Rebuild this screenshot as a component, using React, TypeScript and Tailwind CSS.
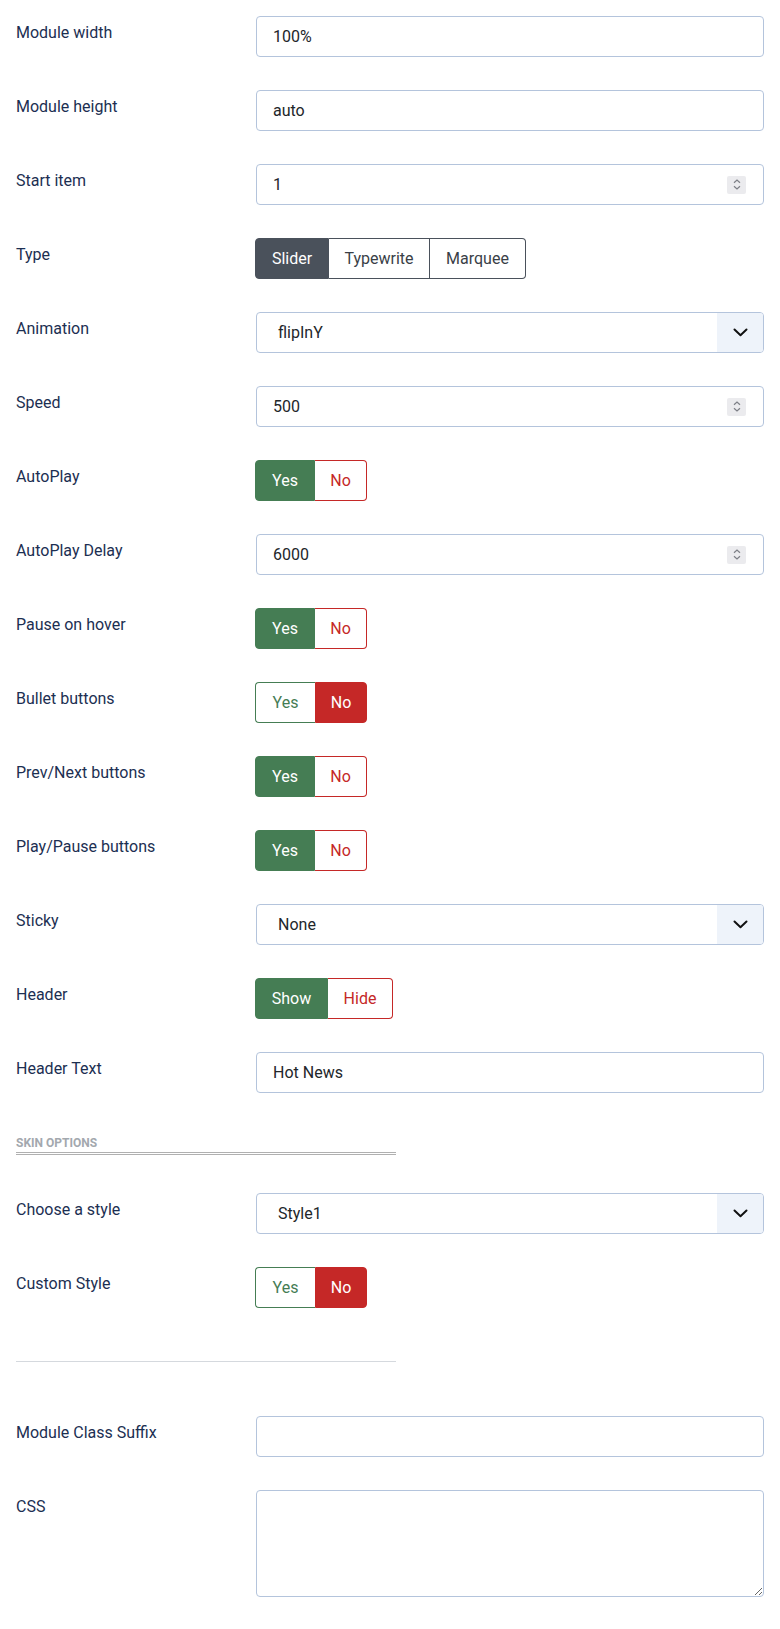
import React from 'react';

const labelCls = 'w-[240px] shrink-0 pt-[5px] text-base leading-6 text-[#1c2f52]';
const inputCls =
  'h-[41px] w-full rounded-[4px] border border-[#b4c4dc] bg-white px-4 text-base text-[#22262a] flex items-center';

function Row({ label, children, className = 'mb-[33px]' }: { label: string; children: React.ReactNode; className?: string }) {
  return (
    <div className={`flex ${className}`}>
      <div className={labelCls}>{label}</div>
      <div className="flex-1 min-w-0">{children}</div>
    </div>
  );
}

function TextBox({ value }: { value: string }) {
  return <div className={inputCls}>{value}</div>;
}

function NumberBox({ value }: { value: string }) {
  return (
    <div className={`${inputCls} justify-between`}>
      <span>{value}</span>
      <span className="mr-[1px] flex h-[18px] w-[19px] flex-col items-center justify-center rounded-[2px] bg-[#ebebee]">
        <svg width="10" height="13" viewBox="0 0 10 13" fill="none" stroke="#7d7f86" strokeWidth="1.2">
          <path d="M2 4.8 L5 2 L8 4.8" />
          <path d="M2 8.2 L5 11 L8 8.2" />
        </svg>
      </span>
    </div>
  );
}

function SelectBox({ value }: { value: string }) {
  return (
    <div className="flex h-[41px] w-full overflow-hidden rounded-[4px] border border-[#b4c4dc] bg-white text-base text-[#22262a]">
      <div className="flex flex-1 items-center pl-[21px]">{value}</div>
      <div className="flex w-[46px] items-center justify-center bg-[#eef3fa]">
        <svg width="15" height="9" viewBox="0 0 15 9" fill="none" stroke="#111" strokeWidth="2" strokeLinecap="round" strokeLinejoin="round">
          <path d="M1.5 1.5 L7.5 7.2 L13.5 1.5" />
        </svg>
      </div>
    </div>
  );
}

function YesNo({ on, yes = 'Yes', no = 'No', wYes = 'w-[60px]', wNo = 'w-[52px]' }: { on: boolean; yes?: string; no?: string; wYes?: string; wNo?: string }) {
  return (
    <div className="ml-[-1px] flex h-[41px] text-base">
      <div
        className={`${wYes} flex items-center justify-center rounded-l-[4px] border ${
          on ? 'border-[#457d54] bg-[#457d54] text-white' : 'border-[#457d54] border-r-0 bg-white text-[#457d54]'
        }`}
      >
        {yes}
      </div>
      <div
        className={`${wNo} flex items-center justify-center rounded-r-[4px] border ${
          on ? 'border-[#c52827] border-l-0 bg-white text-[#c52827]' : 'border-[#c52827] bg-[#c52827] text-white'
        }`}
      >
        {no}
      </div>
    </div>
  );
}

function TypeGroup() {
  return (
    <div className="ml-[-1px] flex h-[41px] text-base text-[#3a3f47]">
      <div className="flex w-[74px] items-center justify-center rounded-l-[4px] border border-[#4a515b] bg-[#4a515b] text-white">Slider</div>
      <div className="flex w-[101px] items-center justify-center border-y border-r border-[#4a515b] bg-white">Typewrite</div>
      <div className="flex w-[96px] items-center justify-center rounded-r-[4px] border-y border-r border-[#4a515b] bg-white">Marquee</div>
    </div>
  );
}

export default function App() {
  return (
    <div className="min-h-[1629px] w-[780px] bg-white px-4 pt-4 pb-8 font-['Roboto',_'Noto_Sans',_sans-serif]">
      <Row label="Module width"><TextBox value="100%" /></Row>
      <Row label="Module height"><TextBox value="auto" /></Row>
      <Row label="Start item"><NumberBox value="1" /></Row>
      <Row label="Type"><TypeGroup /></Row>
      <Row label="Animation"><SelectBox value="flipInY" /></Row>
      <Row label="Speed"><NumberBox value="500" /></Row>
      <Row label="AutoPlay"><YesNo on /></Row>
      <Row label="AutoPlay Delay"><NumberBox value="6000" /></Row>
      <Row label="Pause on hover"><YesNo on /></Row>
      <Row label="Bullet buttons"><YesNo on={false} /></Row>
      <Row label="Prev/Next buttons"><YesNo on /></Row>
      <Row label="Play/Pause buttons"><YesNo on /></Row>
      <Row label="Sticky"><SelectBox value="None" /></Row>
      <Row label="Header">
        <YesNo on yes="Show" no="Hide" wYes="w-[73px]" wNo="w-[65px]" />
      </Row>
      <Row label="Header Text" className="mb-0"><TextBox value="Hot News" /></Row>

      <div className="mt-[43px] w-[380px] border-b-[3px] border-double border-[#b0b0b0] pb-[1px] text-[12px] font-bold uppercase leading-[15px] text-[#a3a8ae]">
        Skin options
      </div>

      <Row label="Choose a style" className="mt-[38px] mb-[33px]"><SelectBox value="Style1" /></Row>
      <Row label="Custom Style" className="mb-0"><YesNo on={false} /></Row>

      <div className="mt-[53px] w-[380px] border-t border-[#d5d9de]" />

      <Row label="Module Class Suffix" className="mt-[54px] mb-[33px]"><TextBox value="" /></Row>
      <Row label="CSS" className="mb-0">
        <textarea className="block h-[107px] w-full rounded-[4px] border border-[#b4c4dc] bg-white px-4 py-2 text-base text-[#22262a] outline-none" defaultValue="" />
      </Row>
    </div>
  );
}
